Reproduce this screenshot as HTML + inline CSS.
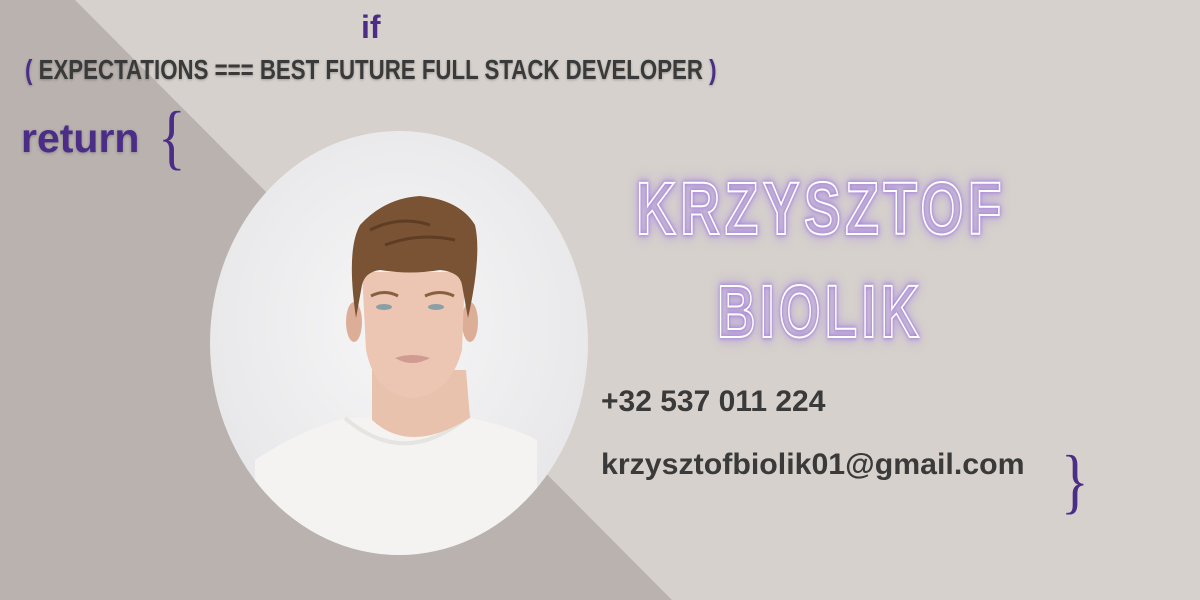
<!DOCTYPE html>
<html><head><meta charset="utf-8"><style>
html,body{margin:0;padding:0}
body{width:1200px;height:600px;position:relative;overflow:hidden;background:#d6d1cc;font-family:"Liberation Sans",sans-serif}
.abs{position:absolute;white-space:nowrap}
.purple{color:#4b2d88}
.neon{font-family:"Liberation Sans",sans-serif;font-weight:700;color:transparent;-webkit-text-stroke:2px #fff;letter-spacing:6px;filter:drop-shadow(0 0 2px #8a5ae0) drop-shadow(0 0 6px #a27ae8);}
</style></head><body>
<svg class="abs" style="left:0;top:0" width="1200" height="600">
<polygon points="0,0 75,0 672,600 0,600" fill="#b9b2ae"/>
<defs>
<clipPath id="c"><ellipse cx="399" cy="343" rx="189" ry="212"/></clipPath>
<radialGradient id="bg" cx="0.5" cy="0.45" r="0.6"><stop offset="0" stop-color="#f6f6f7"/><stop offset="1" stop-color="#e6e6e8"/></radialGradient>
</defs>
<ellipse cx="399" cy="343" rx="189" ry="212" fill="url(#bg)"/>
<g clip-path="url(#c)">
<path d="M255,460 Q300,430 345,418 L455,415 Q510,425 537,440 L537,560 L255,560 Z" fill="#f4f3f1"/>
<path d="M345,418 Q405,470 470,415" fill="none" stroke="#e6e4e0" stroke-width="4"/>
<path d="M372,370 L372,420 Q410,455 470,418 L466,370 Z" fill="#e9c2ae"/>
<ellipse cx="354" cy="322" rx="8" ry="20" fill="#dcae98"/>
<ellipse cx="470" cy="322" rx="8" ry="20" fill="#dcae98"/>
<path d="M362,272 L465,272 L462,350 Q450,395 412,398 Q375,395 366,350 Z" fill="#ecc6b2"/>
<path d="M356,318 Q346,250 360,225 Q385,198 420,196 Q460,200 475,225 Q482,255 468,318 L462,285 Q460,272 440,270 Q410,275 380,270 Q365,272 362,285 Z" fill="#7a5334"/>
<path d="M370,230 Q400,215 430,225 M385,245 Q420,232 455,240" stroke="#5e3d24" stroke-width="3" fill="none"/>
<ellipse cx="384" cy="307" rx="8" ry="3" fill="#8aa0a6"/>
<ellipse cx="436" cy="307" rx="8" ry="3" fill="#8aa0a6"/>
<path d="M371,296 Q385,289 398,296 M425,296 Q440,289 454,296" stroke="#8a5f40" stroke-width="3" fill="none"/>
<path d="M395,358 Q412,352 430,358 Q412,368 395,358 Z" fill="#cf9b92"/>
</g>
</svg>
<div class="abs purple" style="left:361px;top:9px;font-size:32px;font-weight:700">if</div>
<div class="abs" style="left:25px;top:54px;font-size:28px;font-weight:700;color:#3a3a3a;transform:scaleX(0.795);transform-origin:0 0;text-shadow:0 1px 3px rgba(0,0,0,.25)"><span class="purple">(</span> EXPECTATIONS === BEST FUTURE FULL STACK DEVELOPER <span class="purple">)</span></div>
<div class="abs purple" style="left:21px;top:115px;font-size:41px;font-weight:700;text-shadow:0 1px 3px rgba(0,0,0,.25)">return</div>
<div class="abs purple" style="left:158px;top:96px;font-size:72px;font-family:'Liberation Serif',serif;transform:scaleX(0.8);transform-origin:0 0">{</div>
<div class="abs neon" style="left:636px;top:166px;font-size:74px;transform:scaleX(0.745);transform-origin:0 0">KRZYSZTOF</div>
<div class="abs neon" style="left:717px;top:269px;font-size:74px;transform:scaleX(0.72);transform-origin:0 0">BIOLIK</div>
<div class="abs" style="left:601px;top:385px;font-size:30px;font-weight:700;color:#3a3a3a">+32 537 011 224</div>
<div class="abs" style="left:601px;top:448px;font-size:30px;font-weight:700;color:#3a3a3a;transform:scaleX(1.01);transform-origin:0 0">krzysztofbiolik01@gmail.com</div>
<div class="abs purple" style="left:1061px;top:440px;font-size:72px;font-family:'Liberation Serif',serif;transform:scaleX(0.8);transform-origin:0 0">}</div>
</body></html>
